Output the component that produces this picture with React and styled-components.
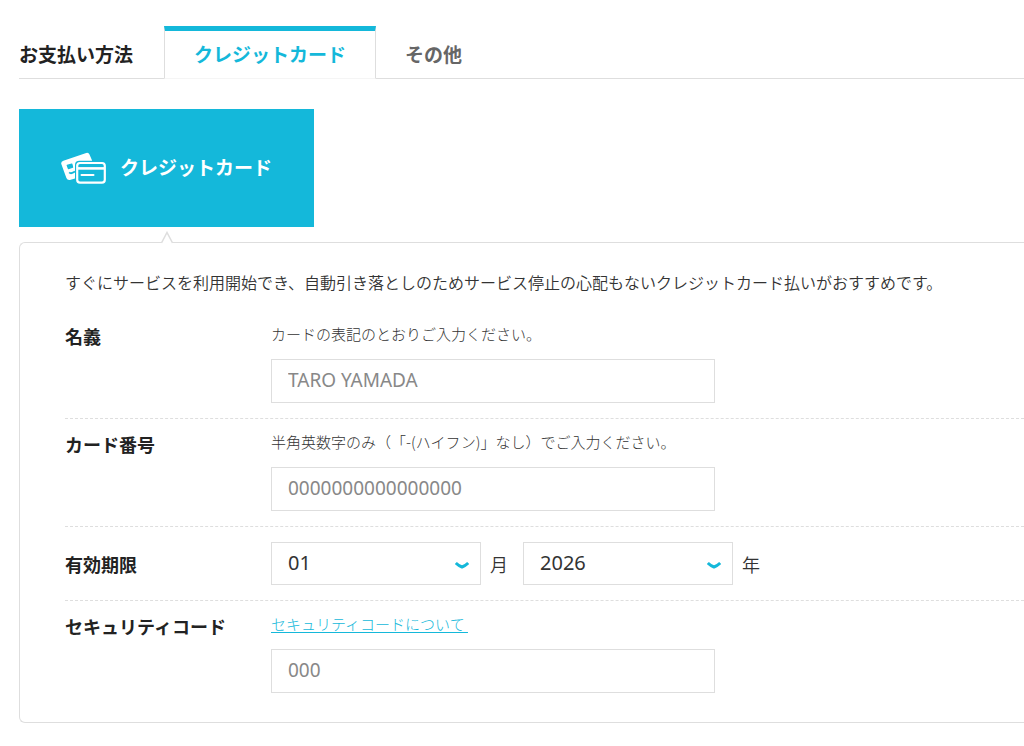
import { useState } from "react";
import styled, { createGlobalStyle } from "styled-components";

const GlobalStyle = createGlobalStyle`
  * {
    box-sizing: border-box;
  }
  body {
    margin: 0;
    background: #fff;
    color: #333;
    font-family: "Noto Sans CJK JP", sans-serif;
    text-spacing-trim: space-all;
    overflow-x: hidden;
  }
  h2, p {
    margin: 0;
  }
`;

const Container = styled.main`
  padding: 26px 0 22px 19px;
`;

const TabBar = styled.div`
  display: flex;
`;
const Title = styled.h2`
  padding: 5px 31px 2px 0;
  border-bottom: 1px solid #dedede;
  color: #222;
  font-size: 19px;
  font-weight: 700;
  line-height: 45px;
`;
const TabList = styled.div`
  display: flex;
  flex: 1;
`;
const Tab = styled.button`
  padding: 0 29px 2px;
  border: solid ${(props) => (props.$active ? "#dedede" : "transparent")};
  border-width: 0 ${(props) => (props.$active ? "1px" : "0")};
  border-top: 5px solid ${(props) => (props.$active ? "#14b8da" : "transparent")};
  border-bottom: 1px solid ${(props) => (props.$active ? "#f5f5f5" : "#dedede")};
  background: none;
  color: ${(props) => (props.$active ? "#14b8da" : "#666")};
  font-family: inherit;
  font-size: 19px;
  font-weight: 700;
  line-height: 45px;
  cursor: pointer;
`;
const TabSpace = styled.div`
  flex: 1;
  border-bottom: 1px solid #dedede;
`;

const Method = styled.button`
  display: flex;
  align-items: center;
  justify-content: center;
  gap: 14px;
  width: 295px;
  height: 118px;
  margin: 30px 0 15px;
  border: none;
  background: #14b8da;
  color: #fff;
  font-family: inherit;
  font-size: 19px;
  font-weight: 700;
  cursor: pointer;
`;
const MethodName = styled.span`
  padding-bottom: 4px;
`;

const Panel = styled.form`
  position: relative;
  padding: 27px 0 14px 45px;
  border: 1px solid #dedede;
  border-right: none;
  border-radius: 6px 0 0 6px;
`;
const Caret = styled.svg`
  position: absolute;
  top: -12px;
  left: 141px;
`;
const Lead = styled.p`
  margin-bottom: 17px;
  font-size: 16px;
  font-weight: 350;
  line-height: 24px;
`;

const Row = styled.div`
  display: grid;
  grid-template-columns: 206px 1fr;
  align-items: ${(props) => (props.$center ? "center" : "start")};
  padding: ${(props) => (props.$center ? "15px" : "11px")} 0 15px;

  & + & {
    border-top: 1px dashed #dedede;
  }
`;
const Label = styled.label`
  color: #222;
  font-size: 18px;
  font-weight: 700;
  line-height: 28px;
`;
const Field = styled.div``;
const Hint = styled.p`
  margin-bottom: 13px;
  font-size: 15px;
  font-weight: 300;
  line-height: 24px;
`;
const HintLink = styled.a`
  color: #14b8da;
  white-space: pre;
  text-underline-offset: 2px;
`;
const Input = styled.input`
  display: block;
  width: 444px;
  max-width: 100%;
  height: 44px;
  padding: 0 16px 2px;
  border: 1px solid #dedede;
  background: #fff;
  color: #333;
  font-family: "Noto Sans", "Noto Sans CJK JP", sans-serif;
  font-size: 19px;

  &::placeholder {
    color: #888;
  }
`;

const Expiry = styled.div`
  display: flex;
  align-items: center;
  gap: 9px;
`;
const SelectBox = styled.div`
  position: relative;
  width: 210px;
`;
const Select = styled.select`
  display: block;
  width: 100%;
  height: 43px;
  padding: 0 40px 2px 16px;
  border: 1px solid #dedede;
  border-radius: 0;
  appearance: none;
  background: #fff;
  color: #333;
  font-family: "Noto Sans", "Noto Sans CJK JP", sans-serif;
  font-size: 20px;
`;
const Option = styled.option``;
const Chevron = styled.svg`
  position: absolute;
  top: 19px;
  right: 12px;
  pointer-events: none;
`;
const Unit = styled.span`
  margin-right: 6px;
  font-size: 18px;
  font-weight: 350;
  line-height: 28px;
`;

const months = Array.from({ length: 12 }, (_, i) => String(i + 1).padStart(2, "0"));
const years = Array.from({ length: 10 }, (_, i) => String(2026 + i));

const CardsIcon = () => (
  <svg width="45" height="32" viewBox="0 0 45 32" aria-hidden="true">
    <path
      d="M2.4 8.8 25.2 1Q27.6.3 28.5 2.5L31.2 8.8H18.5Q14 8.8 14 13V26.6L8.8 28Q6.4 28.4 5.4 26.1L.3 11.9Q-.3 9.7 2.4 8.8Z"
      fill="#fff"
    />
    <path d="M6.2 13.4 10.8 12 11.6 15.2 7.4 16.6Z" fill="#14b8da" stroke="#14b8da" strokeWidth="1.2" strokeLinejoin="round" />
    <path d="M8.2 20.4Q10 22.4 14 19.6" fill="none" stroke="#14b8da" strokeWidth="1.8" />
    <rect x="16.2" y="11" width="27.6" height="19.6" rx="2.8" fill="#14b8da" stroke="#fff" strokeWidth="2.2" />
    <path d="M16.5 16.4H43.5" stroke="#fff" strokeWidth="2.6" />
    <path d="M20.5 23H32.5" stroke="#fff" strokeWidth="2" strokeLinecap="round" />
  </svg>
);

const ExpirySelect = ({ id, label, options, defaultValue }) => (
  <SelectBox>
    <Select id={id} aria-label={label} defaultValue={defaultValue}>
      {options.map((option) => (
        <Option key={option}>{option}</Option>
      ))}
    </Select>
    <Chevron width="14" height="9" viewBox="0 0 14 9" aria-hidden="true">
      <path d="M.8 2Q3.4 4.6 7 6Q10.6 4.6 13.2 2" fill="none" stroke="#14b8da" strokeWidth="3" />
    </Chevron>
  </SelectBox>
);

const App = () => {
  const [tab, setTab] = useState("card");

  return (
    <Container>
      <GlobalStyle />
      <TabBar>
        <Title>お支払い方法</Title>
        <TabList>
          <Tab type="button" $active={tab === "card"} onClick={() => setTab("card")}>
            クレジットカード
          </Tab>
          <Tab type="button" $active={tab === "other"} onClick={() => setTab("other")}>
            その他
          </Tab>
          <TabSpace />
        </TabList>
      </TabBar>
      <Method type="button">
        <CardsIcon />
        <MethodName>クレジットカード</MethodName>
      </Method>
      <Panel>
        <Caret width="12" height="13" viewBox="0 0 12 13" aria-hidden="true">
          <path d="M.5 12 6 1.5 11.5 12V13H.5Z" fill="#fff" />
          <path d="M.5 12 6 1.5 11.5 12" fill="none" stroke="#dedede" strokeWidth="1.5" />
        </Caret>
        <Lead>
          すぐにサービスを利用開始でき、自動引き落としのためサービス停止の心配もないクレジットカード払いがおすすめです。
        </Lead>
        <Row>
          <Label htmlFor="name">名義</Label>
          <Field>
            <Hint>カードの表記のとおりご入力ください。</Hint>
            <Input id="name" type="text" placeholder="TARO YAMADA" />
          </Field>
        </Row>
        <Row>
          <Label htmlFor="number">カード番号</Label>
          <Field>
            <Hint>半角英数字のみ（「-(ハイフン)」なし）でご入力ください。</Hint>
            <Input id="number" type="text" placeholder="0000000000000000" />
          </Field>
        </Row>
        <Row $center>
          <Label htmlFor="month">有効期限</Label>
          <Expiry>
            <ExpirySelect id="month" label="有効期限 月" options={months} defaultValue="01" />
            <Unit>月</Unit>
            <ExpirySelect id="year" label="有効期限 年" options={years} defaultValue="2026" />
            <Unit>年</Unit>
          </Expiry>
        </Row>
        <Row>
          <Label htmlFor="code">セキュリティコード</Label>
          <Field>
            <Hint>
              <HintLink href="#code">{"セキュリティコードについて "}</HintLink>
            </Hint>
            <Input id="code" type="text" placeholder="000" />
          </Field>
        </Row>
      </Panel>
    </Container>
  );
};

export default App;
